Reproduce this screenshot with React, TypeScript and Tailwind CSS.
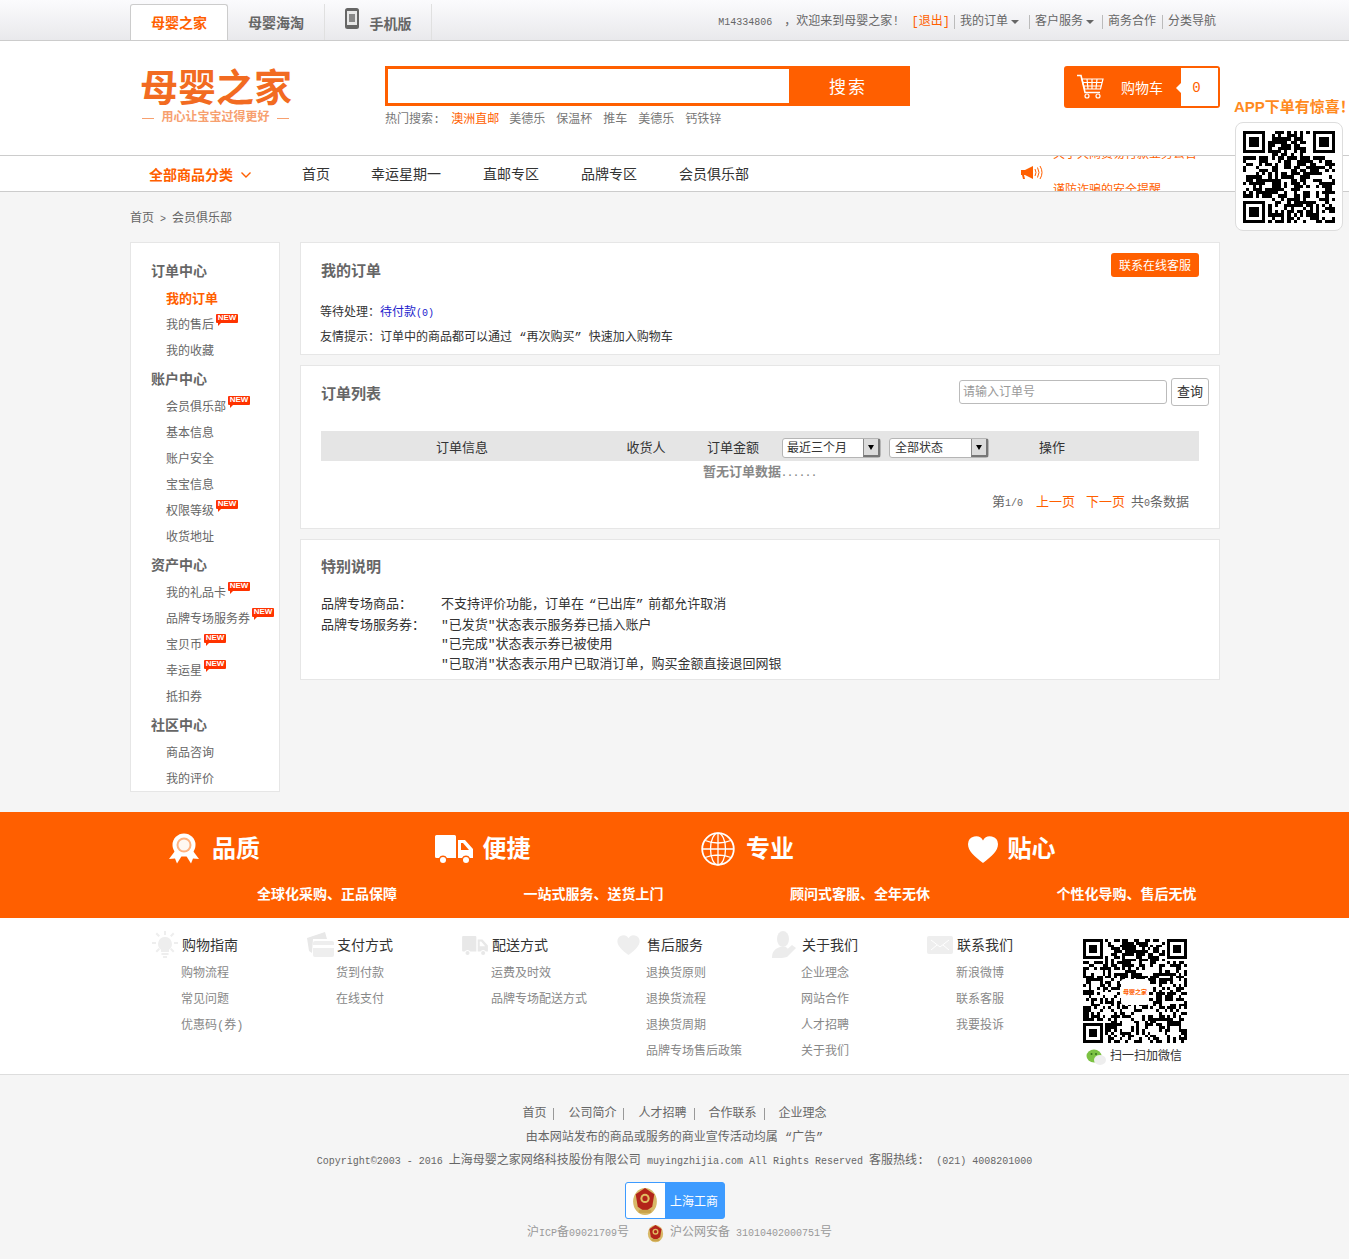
const orange = 'text-[#ff5f00]'

function makeQr(size: number, seed: number) {
  let s = seed
  const next = () => {
    s = (s * 1664525 + 1013904223) % 4294967296
    return s / 4294967296
  }
  const inFinder = (x: number, y: number) =>
    (x < 8 && y < 8) || (x >= size - 8 && y < 8) || (x < 8 && y >= size - 8)
  let d = ''
  for (let y = 0; y < size; y++) {
    for (let x = 0; x < size; x++) {
      if (!inFinder(x, y) && next() > 0.5) d += `M${x} ${y}h1v1h-1z`
    }
  }
  const finder = (x: number, y: number) =>
    `M${x} ${y}h7v7h-7zM${x + 1} ${y + 1}v5h5v-5zM${x + 2} ${y + 2}h3v3h-3z`
  d += finder(0, 0) + finder(size - 7, 0) + finder(0, size - 7)
  return d
}

function Qr({ size, seed, className }: { size: number; seed: number; className: string }) {
  return (
    <svg viewBox={`0 0 ${size} ${size}`} className={className} shapeRendering="crispEdges">
      <path d={makeQr(size, seed)} fill="#000" fillRule="evenodd" />
    </svg>
  )
}

function NewBadge() {
  return (
    <span className="relative -top-[8px] ml-[2px] inline-flex h-[9px] w-[22px] items-center justify-center rounded-[1px] bg-[#ff3300] font-['Liberation_Sans',sans-serif] text-[8px] font-bold leading-none text-white">
      NEW
      <span className="absolute -bottom-[3px] left-[2px] h-0 w-0 border-t-[4px] border-r-[4px] border-t-[#ff3300] border-r-transparent" />
    </span>
  )
}

const sideGroups = [
  { title: '订单中心', items: [['我的订单', 'active'], ['我的售后', 'new'], ['我的收藏', '']] },
  { title: '账户中心', items: [['会员俱乐部', 'new'], ['基本信息', ''], ['账户安全', ''], ['宝宝信息', ''], ['权限等级', 'new'], ['收货地址', '']] },
  { title: '资产中心', items: [['我的礼品卡', 'new'], ['品牌专场服务券', 'new'], ['宝贝币', 'new'], ['幸运星', 'new'], ['抵扣券', '']] },
  { title: '社区中心', items: [['商品咨询', ''], ['我的评价', '']] },
]

function Sidebar() {
  return (
    <div className="w-[150px] border border-[#e6e6e6] bg-white pt-[14px] pl-[20px]">
      {sideGroups.map((g, i) => (
        <div key={g.title}>
          <div className={`flex h-[28px] items-center pt-[2px] text-[14px] font-bold text-[#666] ${i > 0 ? 'mt-[2px]' : ''}`}>{g.title}</div>
          {g.items.map(([label, kind]) => (
            <div key={label} className={`flex h-[26px] items-center pt-[4px] pl-[15px] ${kind === 'active' ? 'text-[13px] font-bold text-[#ff5f00]' : 'text-[12px] text-[#666]'}`}>
              {label}
              {kind === 'new' && <NewBadge />}
            </div>
          ))}
        </div>
      ))}
    </div>
  )
}

function FakeSelect({ label, width, pad }: { label: string; width: string; pad: string }) {
  return (
    <div className={`flex h-[20px] items-center justify-between rounded-[3px] border border-[#b5b5b5] bg-white text-[12px] text-[#333] ${width} ${pad}`}>
      <span className="pt-[2px]">{label}</span>
      <span className="flex h-[18px] w-[17px] items-center justify-center border-l border-r-2 border-b-2 border-l-[#888] border-r-[#777] border-b-[#777] bg-[#dcdcdc]">
        <span className="h-0 w-0 border-x-[3.5px] border-t-[5px] border-x-transparent border-t-black" />
      </span>
    </div>
  )
}

const Cart = () => (
  <svg viewBox="0 0 28 26" className="h-[26px] w-[28px]" fill="none" stroke="#fff" strokeWidth="1.2">
    <path d="M1 1.500h4l4 17h15" strokeWidth="1.6" />
    <path d="M6 5h21l-2.500 10H8.500zM11 5l1 10M16 5v10M21 5l-1 10M7 8.500h19M8 12h17" />
    <circle cx="11" cy="22" r="2" />
    <circle cx="22" cy="22" r="2" />
  </svg>
)

const Medal = () => (
  <svg viewBox="0 0 32 32" className="h-[32px] w-[32px]">
    <path d="M7 18l-6 8 6-.5 2 5 5-8zM25 18l6 8-6-.5-2 5-5-8z" fill="#fff" />
    <circle cx="16" cy="12" r="11.500" fill="#fff" />
    <circle cx="16" cy="12" r="7.500" fill="#ffb27f" />
    <circle cx="16" cy="12" r="5.500" fill="#fff" opacity=".9" />
  </svg>
)

const Truck = ({ color, className }: { color: string; className: string }) => (
  <svg viewBox="0 0 38 28" className={className} fill={color}>
    <path d="M1.500 0h18a1.500 1.500 0 0 1 1.500 1.500V23H12a4.500 4.500 0 0 0-8 0H1.500A1.500 1.500 0 0 1 0 21.500v-20A1.500 1.500 0 0 1 1.500 0z" />
    <path d="M23 5h7l8 9v9h-3a4.500 4.500 0 0 0-8 0h-4zm3 3v7h8l-6-7z" fillRule="evenodd" />
    <circle cx="8" cy="25" r="3" />
    <circle cx="31" cy="25" r="3" />
  </svg>
)

const Heart = ({ color, className }: { color: string; className: string }) => (
  <svg viewBox="0 0 30 27" className={className} fill={color}>
    <path d="M15 27C6 20 0 15 0 8a8 8 0 0 1 15-3.500A8 8 0 0 1 30 8c0 7-6 12-15 19z" />
  </svg>
)

const GlobeIcon = () => (
  <svg viewBox="0 0 34 34" className="h-[34px] w-[34px]" fill="none" stroke="#fff" strokeWidth="1.300">
    <circle cx="17" cy="17" r="15.800" strokeWidth="1.800" />
    <ellipse cx="17" cy="17" rx="7.500" ry="15.800" />
    <path d="M17 1.200v31.600M1.200 17h31.600M4 8.500q13 5 26 0M4 25.500q13-5 26 0" />
  </svg>
)

const Bulb = () => (
  <svg viewBox="0 0 26 28" className="h-[28px] w-[26px]" fill="#eeeeee">
    <path d="M13 6a7 7 0 0 0-4 12.700V21h8v-2.300A7 7 0 0 0 13 6zM9.500 22h7v2h-7zM11 25h4v2h-4z" />
    <path d="M12 0h2v4h-2zM0 11h4v2H0zM22 11h4v2h-4zM3.500 3l1.500-1.500 3 3L6.500 6zM22.500 3 21 1.500l-3 3L19.500 6zM3.500 20l3-3L8 18.500l-3 3zM22.500 20l-3-3-1.500 1.500 3 3z" />
  </svg>
)

const CardIcon = () => (
  <svg viewBox="0 0 28 26" className="h-[26px] w-[28px]">
    <path d="M0 6 18 0l2 7H6l-1 14-3-2z" fill="#e8e8e8" />
    <rect x="6" y="9" width="21" height="16" rx="2" fill="#eeeeee" />
    <rect x="6" y="13" width="21" height="3" fill="#fff" />
  </svg>
)

const UserPen = () => (
  <svg viewBox="0 0 26 28" className="h-[28px] w-[26px]" fill="#ececec">
    <ellipse cx="11" cy="8" rx="6" ry="8" />
    <path d="M0 27c0-7 3-9 8-11h6l2 2-6 9z" />
    <path d="M20 14l4 3-9 9-5 1 1-5z" />
  </svg>
)

const Mail = () => (
  <svg viewBox="0 0 26 18" className="h-[18px] w-[26px]">
    <rect width="26" height="18" rx="2" fill="#eeeeee" />
    <path d="M4 4l9 7 9-7M4 14l6-5M22 14l-6-5" stroke="#fff" fill="none" />
  </svg>
)

const Emblem = ({ className }: { className: string }) => (
  <svg viewBox="0 0 24 30" className={className}>
    <ellipse cx="12" cy="16" rx="11.500" ry="13" fill="#d8b968" />
    <path d="M12 3 21 9l-2 12-7 5-7-5L3 9z" fill="#b3241a" />
    <circle cx="12" cy="13" r="4.500" fill="#e0bd62" />
    <circle cx="12" cy="13" r="2.500" fill="#b3241a" />
    <rect x="6" y="24" width="12" height="3" fill="#c9a24a" />
  </svg>
)

const features = [
  { title: '品质', sub: '全球化采购、正品保障', icon: <Medal />, width: 'w-[44px]' },
  { title: '便捷', sub: '一站式服务、送货上门', icon: <Truck color="#fff" className="h-[28px] w-[38px]" />, width: 'w-[48px]' },
  { title: '专业', sub: '顾问式客服、全年无休', icon: <GlobeIcon />, width: 'w-[45px]' },
  { title: '贴心', sub: '个性化导购、售后无忧', icon: <Heart color="#fff" className="h-[27px] w-[30px]" />, width: 'w-[40px]' },
]

const footerCols = [
  { title: '购物指南', icon: <Bulb />, links: ['购物流程', '常见问题', '优惠码(券)'] },
  { title: '支付方式', icon: <CardIcon />, links: ['货到付款', '在线支付'] },
  { title: '配送方式', icon: <Truck color="#e8e8e8" className="h-[19px] w-[26px]" />, links: ['运费及时效', '品牌专场配送方式'] },
  { title: '售后服务', icon: <Heart color="#eeeeee" className="h-[20px] w-[23px]" />, links: ['退换货原则', '退换货流程', '退换货周期', '品牌专场售后政策'] },
  { title: '关于我们', icon: <UserPen />, links: ['企业理念', '网站合作', '人才招聘', '关于我们'] },
  { title: '联系我们', icon: <Mail />, links: ['新浪微博', '联系客服', '我要投诉'] },
]

export default function App() {
  return (
    <div className="relative h-[1259px] overflow-hidden bg-[#f5f5f5] font-['Liberation_Mono','Noto_Sans_CJK_SC',monospace] text-[12px] text-[#333]">
      {/* Top bar */}
      <div className="h-[41px] border-b border-[#cccccc] bg-gradient-to-b from-[#fbfbfd] to-[#e9e9ec]">
        <div className="ml-[130px] flex h-full w-[1090px] items-end justify-between">
          <div className="flex h-[36px] items-stretch">
            <div className="flex w-[98px] items-center justify-center rounded-t-[3px] border border-b-0 border-[#cccccc] bg-white pt-[4px] text-[14px] font-bold text-[#ff5f00]">母婴之家</div>
            <div className="flex w-[97px] items-center justify-center border-r border-[#e0e0e0] pt-[4px] text-[14px] font-bold text-[#666]">母婴海淘</div>
            <div className="flex w-[107px] items-center justify-center gap-[11px] border-r border-[#e0e0e0] text-[14px] font-bold text-[#666]">
              <svg viewBox="0 0 14 21" className="-mt-[8px] h-[21px] w-[14px]">
                <rect width="14" height="21" rx="2.500" fill="#666" />
                <rect x="2" y="3" width="10" height="14" fill="#e8e8e8" />
                <rect x="4" y="6" width="6" height="8" fill="#888" />
              </svg>
              <span className="mt-[6px]">手机版</span>
            </div>
          </div>
          <div className="flex h-[40px] items-center pt-[4px] pr-[4px] text-[12px] text-[#666]">
            <span className="text-[10px]">M14334806</span>
            <span className="ml-[12px]">，欢迎来到母婴之家!</span>
            <span className={`ml-[12px] ${orange}`}>[退出]</span>
            <span className="ml-[4px] flex h-[14px] items-center border-l border-[#bbb] pl-[5px]">我的订单<span className="ml-[3px] h-0 w-0 border-x-[4px] border-t-[4px] border-x-transparent border-t-[#666]" /></span>
            <span className="ml-[10px] flex h-[14px] items-center border-l border-[#bbb] pl-[5px]">客户服务<span className="ml-[3px] h-0 w-0 border-x-[4px] border-t-[4px] border-x-transparent border-t-[#666]" /></span>
            <span className="ml-[8px] flex h-[14px] items-center border-l border-[#bbb] pl-[5px]">商务合作</span>
            <span className="ml-[6px] flex h-[14px] items-center border-l border-[#bbb] pl-[5px]">分类导航</span>
          </div>
        </div>
      </div>

      {/* Logo, search and cart */}
      <div className="h-[114px] bg-white">
        <div className="ml-[130px] flex w-[1090px] items-start">
          <div className="mt-[22px] ml-[10px] w-[245px]">
            <div className="h-[44px] font-['Noto_Sans_CJK_SC',sans-serif] text-[38px] leading-[44px] font-bold text-[#f26b21]">母婴之家</div>
            <div className="mt-[3px] flex w-[151px] items-center justify-between pl-[2px] text-[12px] leading-[16px] font-bold text-[#f7a06f]">
              <span className="h-px w-[12px] bg-[#f7a06f]" />
              用心让宝宝过得更好
              <span className="mr-[2px] h-px w-[12px] bg-[#f7a06f]" />
            </div>
          </div>
          <div className="mt-[25px] w-[525px]">
            <div className="flex h-[40px] border-[3px] border-[#ff5f00]">
              <input className="h-full w-[401px] bg-white outline-none" />
              <div className="flex flex-1 items-center justify-center bg-[#ff5f00] pt-[5px] text-[17px] tracking-[2px] text-white">搜索</div>
            </div>
            <div className="mt-[7px] flex h-[14px] items-center text-[12px] text-[#777]">
              <span>热门搜索:</span>
              <span className={`ml-[11px] ${orange}`}>澳洲直邮</span>
              <span className="ml-[10px]">美德乐</span>
              <span className="ml-[11px]">保温杯</span>
              <span className="ml-[11px]">推车</span>
              <span className="ml-[11px]">美德乐</span>
              <span className="ml-[11px]">钙铁锌</span>
            </div>
          </div>
          <div className="mt-[25px] ml-[154px] flex h-[42px] w-[156px] items-stretch rounded-[3px] border-2 border-[#ff5f00] bg-[#ff5f00]">
            <div className="flex flex-1 items-center pl-[10px] text-white">
              <Cart />
              <span className="ml-[17px] pt-[4px] text-[14px]">购物车</span>
            </div>
            <div className="relative flex w-[37px] items-center justify-center bg-white pt-[2px] pr-[6px] text-[14px] text-[#ff5f00]">
              0
              <span className="absolute top-[15px] -left-[5px] h-0 w-0 border-y-[5px] border-r-[5px] border-y-transparent border-r-white" />
            </div>
          </div>
        </div>
      </div>

      {/* Nav */}
      <div className="h-[37px] border-y border-[#cccccc] bg-white">
        <div className="ml-[130px] flex h-full w-[1090px] items-center">
          <span className="ml-[19px] pt-[5px] text-[14px] font-bold text-[#ff5f00]">全部商品分类</span>
          <svg viewBox="0 0 12 8" className="mt-[3px] ml-[7px] h-[8px] w-[12px]" fill="none" stroke="#ff5f00" strokeWidth="1.400">
            <path d="M1.500 1.500 6 6l4.500-4.500" />
          </svg>
          <div className="ml-[50px] flex gap-[42px] pt-[4px] text-[14px] text-[#333]">
            <span className="-mr-[1px]">首页</span>
            <span>幸运星期一</span>
            <span>直邮专区</span>
            <span>品牌专区</span>
            <span>会员俱乐部</span>
          </div>
          <svg viewBox="0 0 22 14" className="-mt-[1px] ml-[272px] h-[14px] w-[22px]" fill="#ff5f00">
            <path d="M0 4h4l8-4v13L4 9H3l1 4H2L1 9H0z" />
            <path d="M14 3q2 3.500 0 7M16.500 1.500q3 5 0 10M19 0q4 6.500 0 13" fill="none" stroke="#ff5f00" />
          </svg>
          <div className="ml-[10px] h-[35px] w-[150px] overflow-hidden text-[12px] leading-[14px] text-[#ff5f00]">
            <div className="-mt-[8px]">关于天闹贸易付款业务公告</div>
            <div className="mt-[22px]">谨防诈骗的安全提醒</div>
          </div>
        </div>
      </div>

      {/* APP floating QR */}
      <div className="absolute top-[98px] left-[1234px] w-[115px]">
        <div className="font-['Liberation_Sans','Noto_Sans_CJK_SC',sans-serif] text-[15px] leading-[18px] font-bold whitespace-nowrap text-[#ff8a1e]">APP下单有惊喜！</div>
        <div className="mt-[6px] ml-[1px] flex h-[109px] w-[108px] items-center justify-center rounded-[8px] border border-[#dddddd] bg-white">
          <Qr size={29} seed={77} className="h-[92px] w-[92px]" />
        </div>
      </div>

      <div className="ml-[130px] w-[1090px]">
        {/* Breadcrumb */}
        <div className="flex h-[50px] items-center pt-[4px] text-[12px] text-[#666]">
          首页<span className="mx-[6px] text-[10px]">&gt;</span>会员俱乐部
        </div>

        <div className="flex items-start gap-[20px]">
          <Sidebar />
          <div className="flex w-[920px] flex-col gap-[10px]">
            {/* My orders */}
            <div className="h-[113px] border border-[#e6e6e6] bg-white px-[20px]">
              <div className="flex h-[57px] items-start justify-between">
                <span className="mt-[21px] text-[15px] leading-[18px] font-bold text-[#666]">我的订单</span>
                <span className="mt-[10px] flex h-[24px] w-[88px] items-center justify-center rounded-[3px] bg-[#ff5f00] pt-[3px] text-[12px] text-white">联系在线客服</span>
              </div>
              <div className="-ml-[1px] flex h-[22px] items-center pt-[4px] text-[12px]">
                等待处理：<span className="text-[#2222cc]">待付款<span className="text-[10px]">(0)</span></span>
              </div>
              <div className="-ml-[1px] mt-[3px] flex h-[22px] items-center pt-[4px] text-[12px] whitespace-pre">友情提示：订单中的商品都可以通过 “再次购买” 快速加入购物车</div>
            </div>

            {/* Order list */}
            <div className="h-[164px] border border-[#e6e6e6] bg-white pl-[20px]">
              <div className="flex h-[65px] items-start justify-between pr-[10px]">
                <span className="mt-[21px] text-[15px] leading-[18px] font-bold text-[#666]">订单列表</span>
                <div className="mt-[12px] flex items-start gap-[4px]">
                  <input placeholder="请输入订单号" className="mt-[2px] h-[24px] w-[208px] rounded-[3px] border border-[#bbbbbb] px-[3px] pt-[2px] text-[12px] placeholder:text-[#999] outline-none" />
                  <div className="flex h-[28px] w-[38px] items-center justify-center rounded-[3px] border border-[#bbbbbb] pt-[2px] text-[13px]">查询</div>
                </div>
              </div>
              <div className="flex h-[30px] w-[878px] items-center bg-[#e5e5e5] pt-[4px] text-[13px]">
                <span className="w-[282px] pt-[2px] text-center">订单信息</span>
                <span className="w-[86px] pt-[2px] text-center">收货人</span>
                <span className="w-[88px] pt-[2px] text-center">订单金额</span>
                <span className="ml-[5px]"><FakeSelect label="最近三个月" width="w-[99px]" pad="pl-[4px]" /></span>
                <span className="ml-[8px]"><FakeSelect label="全部状态" width="w-[100px]" pad="pl-[5px]" /></span>
                <span className="w-[126px] pt-[2px] text-center">操作</span>
              </div>
              <div className="flex h-[22px] w-[878px] items-center justify-center pt-[2px] text-[13px] font-bold text-[#888]">暂无订单数据<span className="text-[10px]">......</span></div>
              <div className="mt-[12px] flex h-[16px] w-[868px] items-center justify-end text-[13px] text-[#666]">
                <span>第<span className="text-[10px]">1/0</span></span>
                <span className={`ml-[13px] ${orange}`}>上一页</span>
                <span className={`ml-[11px] ${orange}`}>下一页</span>
                <span className="ml-[6px]">共<span className="text-[10px]">0</span>条数据</span>
              </div>
            </div>

            {/* Notes */}
            <div className="h-[141px] border border-[#e6e6e6] bg-white px-[20px]">
              <div className="mt-[20px] text-[15px] leading-[18px] font-bold text-[#666]">特别说明</div>
              <div className="mt-[17px] text-[13px] leading-[19.5px]">
                <div className="flex whitespace-pre"><span className="w-[120px]">品牌专场商品：</span><span>不支持评价功能，订单在<span className="text-[8px]"> </span>“已出库”<span className="text-[8px]"> </span>前都允许取消</span></div>
                <div className="flex"><span className="w-[120px]">品牌专场服务券：</span>"已发货"状态表示服务券已插入账户</div>
                <div className="pl-[120px]">"已完成"状态表示券已被使用</div>
                <div className="pl-[120px]">"已取消"状态表示用户已取消订单，购买金额直接退回网银</div>
              </div>
            </div>
          </div>
        </div>
      </div>

      {/* Feature band */}
      <div className="mt-[20px] h-[106px] bg-[#ff5f00] text-white">
        <div className="ml-[130px] flex w-[1090px] pl-[38px]">
          {features.map((f) => (
            <div key={f.title} className="w-[266.500px] shrink-0">
              <div className="mt-[20px] flex h-[34px] items-center">
                <span className={`flex items-center ${f.width}`}>{f.icon}</span>
                <span className="pt-[4px] text-[24px] font-bold">{f.title}</span>
              </div>
              <div className="mt-[18px] pt-[1px] pl-[89px] text-[14px] leading-[20px] font-bold whitespace-nowrap">{f.sub}</div>
            </div>
          ))}
        </div>
      </div>

      {/* Footer links */}
      <div className="h-[157px] border-b border-[#dddddd] bg-white">
        <div className="ml-[130px] flex w-[1090px] pl-[22px]">
          {footerCols.map((c) => (
            <div key={c.title} className="w-[155px] shrink-0 pt-[14px]">
              <div className="flex h-[26px] items-center text-[14px] text-[#333]">
                <span className="flex w-[30px] shrink-0 items-center">{c.icon}</span>
                <span className="pt-[2px]">{c.title}</span>
              </div>
              {c.links.map((l) => (
                <div key={l} className="flex h-[26px] items-center pt-[6px] pl-[29px] text-[12px] whitespace-nowrap text-[#888]">{l}</div>
              ))}
            </div>
          ))}
          <div className="ml-[1px] pt-[21px]">
            <div className="relative h-[104px] w-[104px]">
              <Qr size={37} seed={4242} className="h-[104px] w-[104px]" />
              <span className="absolute top-[40px] left-[38px] flex h-[26px] w-[28px] items-center justify-center rounded-[3px] bg-white text-[6px] font-bold whitespace-nowrap text-[#ff5f00]">母婴之家</span>
            </div>
            <div className="mt-[6px] ml-[3px] flex h-[16px] items-center whitespace-nowrap text-[12px]">
              <svg viewBox="0 0 20 16" className="mr-[4px] h-[16px] w-[20px]">
                <ellipse cx="8" cy="7" rx="7.500" ry="6.500" fill="#7cc243" />
                <ellipse cx="14" cy="11" rx="6" ry="5" fill="#eeeeee" />
                <circle cx="5.500" cy="5" r="1" fill="#35701a" />
                <circle cx="10" cy="5" r="1" fill="#35701a" />
              </svg>
              扫一扫加微信
            </div>
          </div>
        </div>
      </div>

      {/* Bottom */}
      <div className="flex flex-col items-center pt-[25px] text-[12px] text-[#666]">
        <div className="flex h-[24px] items-center pt-[4px]">
          {['首页', '公司简介', '人才招聘', '合作联系', '企业理念'].map((l, i) => (
            <span key={l} className="flex items-center">
              {l}
              {i < 4 && <span className="mr-[14px] ml-[7px] h-[12px] border-l border-[#999]" />}
            </span>
          ))}
        </div>
        <div className="flex h-[24px] items-center pt-[4px] whitespace-pre">由本网站发布的商品或服务的商业宣传活动均属 “广告”</div>
        <div className="flex h-[24px] items-center pt-[2px] text-[10px] whitespace-pre">
          Copyright©2003 - 2016 <span className="text-[12px]">上海母婴之家网络科技股份有限公司</span> muyingzhijia.com All Rights Reserved <span className="text-[12px]">客服热线:</span>  (021) 4008201000
        </div>
        <div className="mt-[10px] flex h-[37px] w-[100px] items-stretch rounded-[3px] border border-[#3d9bff] bg-[#3d9bff]">
          <span className="flex w-[39px] items-center justify-center rounded-l-[2px] bg-white">
            <Emblem className="h-[31px] w-[26px]" />
          </span>
          <span className="flex flex-1 items-center justify-center pt-[4px] text-[12px] text-white">上海工商</span>
        </div>
        <div className="mt-[2px] ml-[10px] flex h-[24px] items-center text-[#999]">
          <span>沪<span className="text-[10px]">ICP</span>备<span className="text-[10px]">09021709</span>号</span>
          <Emblem className="mr-[6px] ml-[18px] h-[20px] w-[17px]" />
          沪公网安备 <span className="ml-[6px] text-[10px]">31010402000751</span>号
        </div>
      </div>
    </div>
  )
}
